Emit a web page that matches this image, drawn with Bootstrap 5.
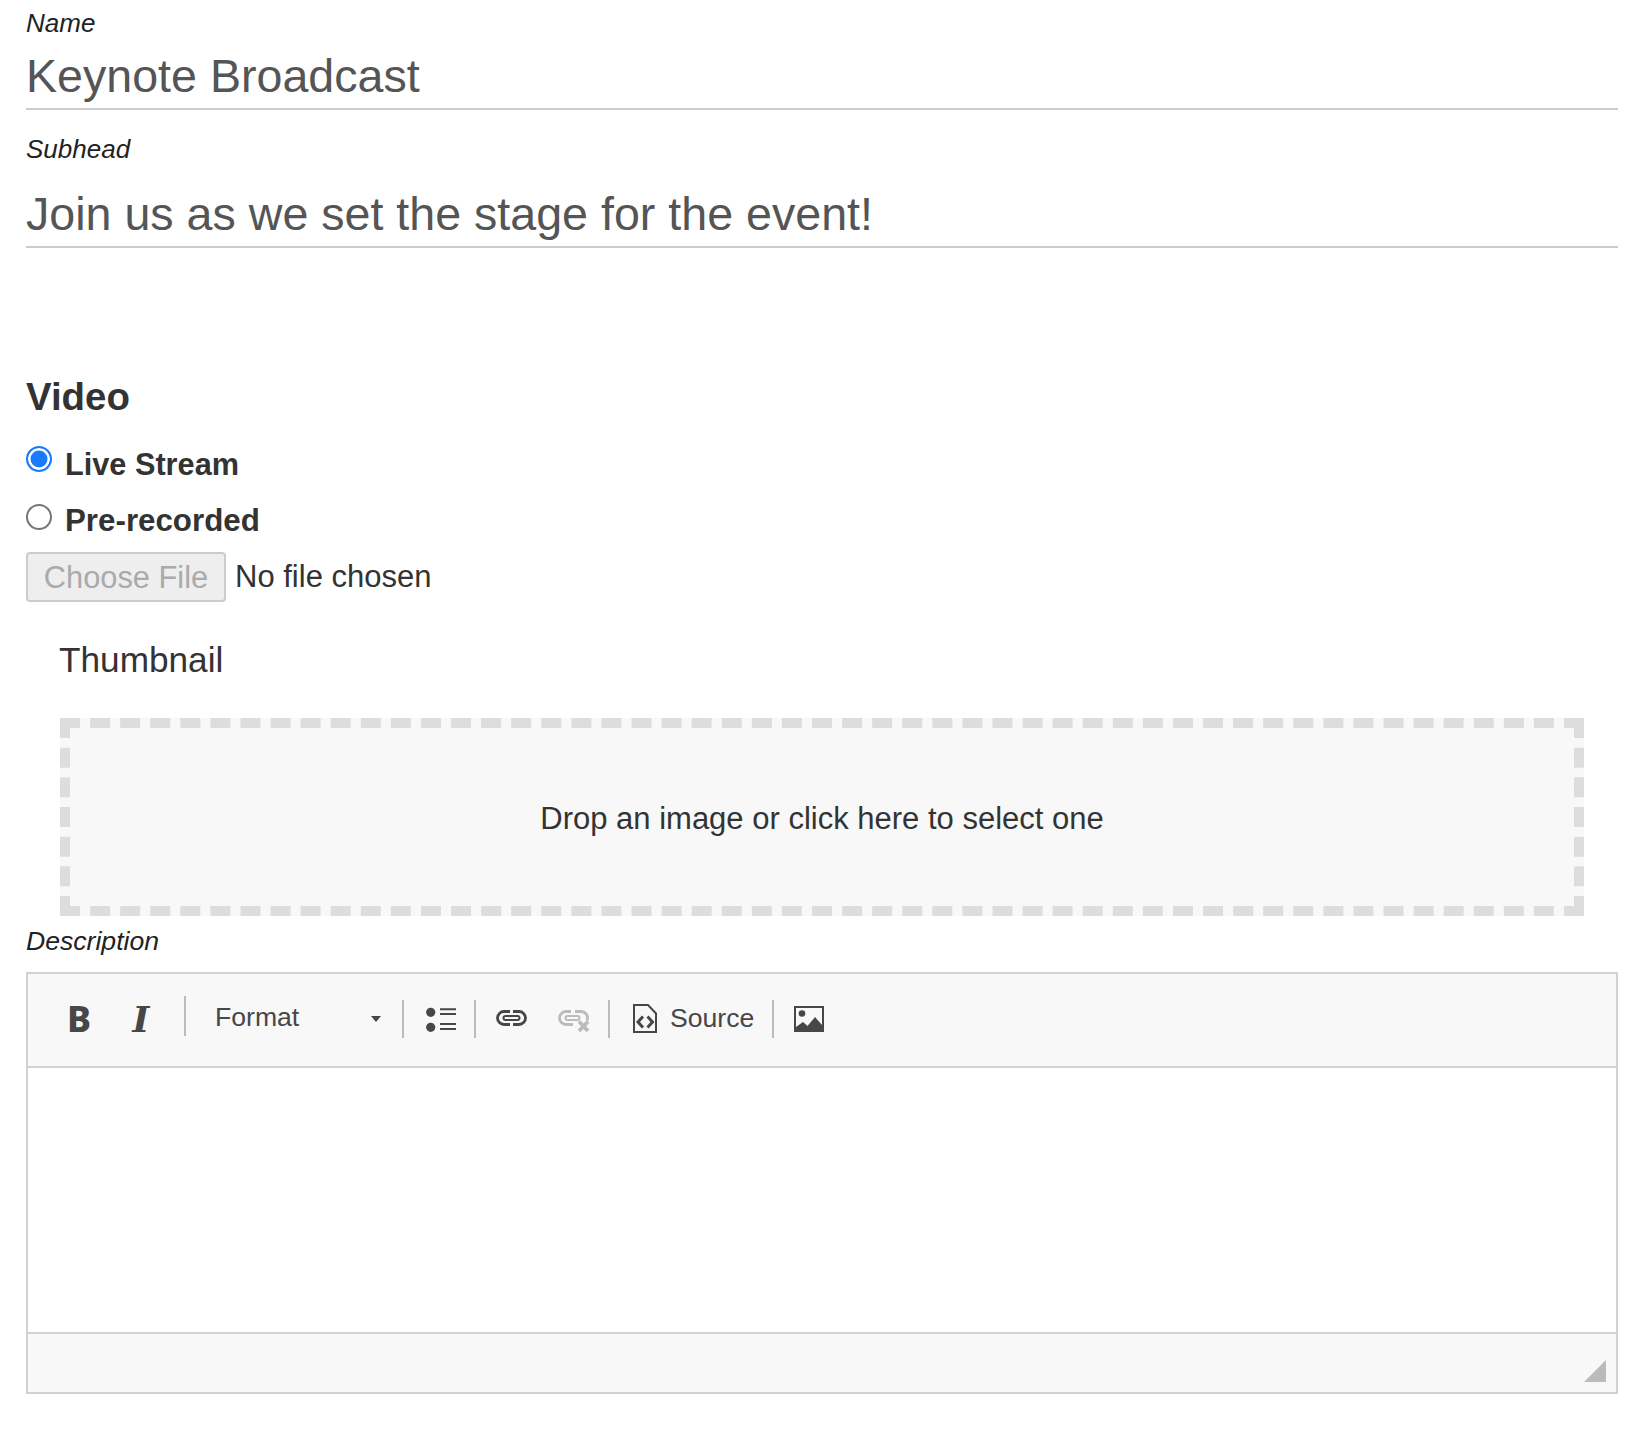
<!DOCTYPE html>
<html lang="en">
<head>
<meta charset="utf-8">
<title>Keynote Broadcast</title>
<link href="https://cdn.jsdelivr.net/npm/bootstrap@5.3.0/dist/css/bootstrap.min.css" rel="stylesheet">
<style>
body{margin:0;background:#fff;color:#333;font-family:"Liberation Sans",Arial,sans-serif;font-size:30.4px}
.page-form{padding:5px 30px 0 26px}
.fld-label{display:block;font-size:26px;font-style:italic;line-height:36px;height:36px;margin:0;color:#222}
.fld-gap{margin-top:21px}
.fld-input.form-control{height:69px;border:0;border-bottom:2px solid #ccc;border-radius:0;padding:2px 0 0;font-size:46.6px;line-height:66px;color:#555;background:transparent}
.fld-input.fld-tall.form-control{height:81px;padding-top:14px}
.video-head{font-size:38.4px;font-weight:700;line-height:46px;margin:126px 0 0;color:#333}
.vid-row.form-check{display:flex;padding:0;margin:23px 0 0;min-height:0}
.vid-row.vid-next.form-check{margin-top:12px}
.vid-row .form-check-label{font-weight:700;font-size:30.700px;line-height:44px;color:#333}
.vid-row.vid-next .form-check-label{font-size:31.300px}
.vid-row.form-check .vid-dot{float:none;flex:none;width:26px;height:26px;margin:3px 13px 0 0;border:2px solid #767676;background-color:#fff}
.vid-row.vid-next.form-check .vid-dot{margin-top:5px}
.vid-row.form-check .vid-dot:checked{border-color:#1a7bff;background:#1a7bff;background-image:none;box-shadow:inset 0 0 0 2.5px #fff}
.file-row{margin-top:9px;height:50px}
.file-btn.btn{width:200px;height:50px;padding:1px 0 0;font-size:30.8px;line-height:46px;color:#aaa;background:#eee;border:2px solid #ccc;border-radius:4px;opacity:1}
.file-none{margin-left:9px;font-size:31px;color:#333}
.thumb-title{font-size:35.2px;line-height:48px;margin:34px 0 0 33px;color:#333}
.drop-box{margin:34px 0 0 34px;width:1524px;height:198px;border:10px dashed #ddd;background:#f8f8f8;padding-top:5px;font-size:31px;color:#333}
.desc-gap{margin-top:7px;font-size:26.600px}
.rte-box{margin-top:13px;border:2px solid #d1d1d1;height:422px;background:#fff}
.rte-bar{padding:0 0 2px 20px;background:#f8f8f8;border-bottom:2px solid #d1d1d1;color:#474747;box-sizing:content-box;height:90px}
.rte-cell{width:62px;text-align:center;line-height:1}
.rte-b{font-family:"Noto Sans",sans-serif;font-weight:800;font-size:36px}
.rte-i{font-family:"DejaVu Serif",serif;font-weight:700;font-style:italic;font-size:36px}
.rte-sep{flex:none;width:2px;height:38px;background:#bcbcbc}
.rte-sep-first{height:40px;margin:0 0 6px 12px}
.rte-format{width:216px;padding:0 21px 0 29px;font-size:26.600px;margin-bottom:2px}
.rte-caret{width:0;height:0;border-left:5px solid transparent;border-right:5px solid transparent;border-top:6px solid #474747;margin-top:2px}
.ic-list{margin:0 18px 0 22px}
.ic-link{margin:0 0 2px 20px}
.ic-unlink{margin:5px 18px 0 31px}
.ic-doc{margin:0 0 2px 23px}
.rte-source{margin:0 19px 2px 13px;font-size:26.600px;line-height:1;width:83px;white-space:nowrap}
.ic-img{margin-left:20px}
.rte-body{height:264px;background:#fff}
.rte-status{height:60px;background:#f8f8f8;border-top:2px solid #d1d1d1;padding:26px 10px 0 0}
</style>
</head>
<body>
<form class="page-form">
  <label class="fld-label">Name</label>
  <div class="form-control fld-input">Keynote Broadcast</div>
  <label class="fld-label fld-gap">Subhead</label>
  <div class="form-control fld-input fld-tall">Join us as we set the stage for the event!</div>

  <h4 class="video-head">Video</h4>
  <div class="form-check vid-row">
    <input class="form-check-input vid-dot" type="radio" name="vid" id="vidLive" checked>
    <label class="form-check-label" for="vidLive">Live Stream</label>
  </div>
  <div class="form-check vid-row vid-next">
    <input class="form-check-input vid-dot" type="radio" name="vid" id="vidPre">
    <label class="form-check-label" for="vidPre">Pre-recorded</label>
  </div>
  <div class="d-flex align-items-center file-row">
    <button type="button" class="btn file-btn" disabled>Choose File</button>
    <span class="file-none">No file chosen</span>
  </div>

  <div class="thumb-title">Thumbnail</div>
  <div class="drop-box d-flex align-items-center justify-content-center">Drop an image or click here to select one</div>

  <label class="fld-label desc-gap">Description</label>
  <div class="rte-box">
    <div class="rte-bar d-flex align-items-center">
      <span class="rte-cell rte-b">B</span>
      <span class="rte-cell rte-i">I</span>
      <span class="rte-sep rte-sep-first"></span>
      <div class="rte-format d-flex align-items-center justify-content-between"><span>Format</span><span class="rte-caret"></span></div>
      <span class="rte-sep"></span>
      <svg class="ic-list" width="30" height="26" viewBox="0 0 30 26" fill="#474747" stroke="none"><circle cx="4.7" cy="6.3" r="4.6"/><circle cx="4.7" cy="21.3" r="4.6"/><path d="M14 2.3h16v2H14zM14 7h16v2H14zM14 17h16v2H14zM14 22h16v2H14z"/></svg>
      <span class="rte-sep"></span>
      <svg class="ic-link" width="31" height="16" viewBox="0 0 31 16" fill="none" stroke="#474747" stroke-width="2.800"><path d="M14 1.500H8a6.500 6.500 0 0 0 0 13h6M17 1.500h6a6.500 6.500 0 0 1 0 13h-6"/><rect x="7.500" y="6" width="16" height="4" rx="2" stroke-width="2"/></svg>
      <svg class="ic-unlink" width="32" height="23" viewBox="0 0 32 23" fill="none" stroke="#bbb" stroke-width="2.800"><path d="M13 1.500H8a6.500 6.500 0 0 0 0 13h7M17 1.500h6a6.500 6.500 0 0 1 6 9"/><rect x="7.500" y="6" width="14" height="4" rx="2" stroke-width="2"/><path d="M21 11.500l9 9.500M30 11.500l-9 9.500" stroke-width="3.800"/></svg>
      <span class="rte-sep"></span>
      <svg class="ic-doc" width="24" height="29" viewBox="0 0 24 29" fill="none" stroke="#474747"><path d="M1 1h14l8 8.500V28H1z" stroke-width="2"/><path d="M10 12.500 5 18l5 5.500M14.500 12.500l5 5.500-5 5.500" stroke-width="3"/></svg>
      <span class="rte-source">Source</span>
      <span class="rte-sep"></span>
      <svg class="ic-img" width="30" height="26" viewBox="0 0 30 26"><rect x="1" y="1" width="28" height="24" fill="none" stroke="#474747" stroke-width="2"/><circle cx="8" cy="7.500" r="3.300" fill="#474747"/><path d="M2 25v-4l7-5 4.500 4 7.500-9 7 8v6z" fill="#474747"/></svg>
    </div>
    <div class="rte-body"></div>
    <div class="rte-status d-flex justify-content-end"><svg width="22" height="22" viewBox="0 0 22 22"><path d="M22 0v22H0z" fill="#bbb"/></svg></div>
  </div>
</form>
<script src="https://cdn.jsdelivr.net/npm/bootstrap@5.3.0/dist/js/bootstrap.bundle.min.js"></script>
</body>
</html>
